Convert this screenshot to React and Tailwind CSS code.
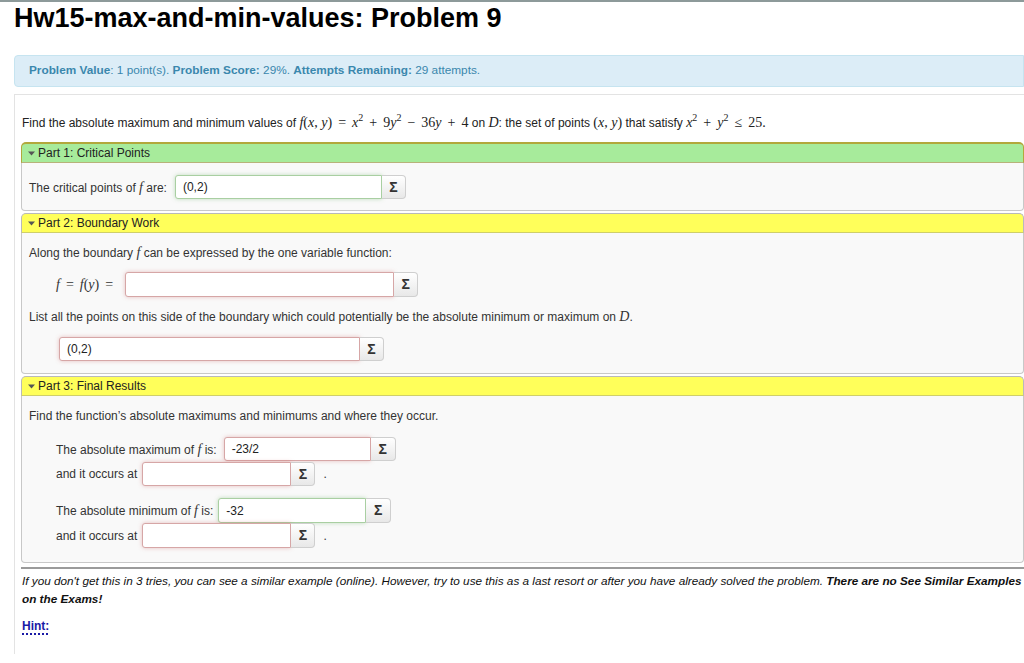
import React from "react";

const serif = "font-['Liberation_Serif','Times_New_Roman',serif] text-[14px]";

function V({ children }) {
  return <span className="italic">{children}</span>;
}
function Op({ children }) {
  return <span className="mx-[6px]">{children}</span>;
}
function Sup({ children }) {
  return <sup className="text-[10px] relative top-[-6px] align-baseline">{children}</sup>;
}

function Tri() {
  return (
    <svg width="7" height="5" viewBox="0 0 7 5" className="mr-[3px] inline-block">
      <path d="M0 0.5 L7 0.5 L3.5 4.5 Z" fill="#555" />
    </svg>
  );
}

function Field({ w, value = "", state = "bad", sigW = 24, h = 24 }) {
  const border =
    state === "good"
      ? "border-[#a9cfa2] shadow-[0_0_4px_rgba(90,170,80,0.35)]"
      : "border-[#d6a6a6] shadow-[0_0_4px_rgba(200,90,90,0.35)]";
  return (
    <span className="inline-flex items-stretch align-middle shrink-0" style={{ height: h }}>
      <span
        className={`bg-white border ${border} rounded-l-[3px] flex items-center pl-[7px] text-[12px] text-[#222]`}
        style={{ width: w }}
      >
        {value}
      </span>
      <span
        className="border border-l-0 border-[#cfcfcf] rounded-r-[4px] bg-gradient-to-b from-[#ffffff] to-[#e8e8e8] flex items-center justify-center text-[14px] font-bold text-[#333]"
        style={{ width: sigW }}
      >
        Σ
      </span>
    </span>
  );
}

function Header({ color, children }) {
  const cls =
    color === "green"
      ? "bg-[#a7eb9b] border-t-2 border-x border-[#b2a83c] border-b border-b-[#b7b27a]"
      : "bg-[#ffff5a] border-t border-x border-[#b9b9b9] border-b border-b-[#cfcf6a]";
  return (
    <div
      className={`${cls} rounded-t-[5px] flex items-center pl-[6px] text-[12px] text-[#222]`}
      style={{ height: color === "green" ? 21 : 20 }}
    >
      <Tri />
      {children}
    </div>
  );
}

function Body({ children, cls = "" }) {
  return (
    <div className={`bg-[#f9f9f9] border-x border-b border-[#c8c8c8] rounded-b-[4px] pl-[7px] text-[12px] text-[#333] ${cls}`}>
      {children}
    </div>
  );
}

export default function App() {
  return (
    <div className="w-[1024px] h-[663px] bg-white overflow-hidden border-t-2 border-[#8d9a9a] font-['Liberation_Sans',Arial,sans-serif] text-[12px] text-[#222]">
      <h1 className="ml-[14px] mt-[1px] text-[27px] font-bold leading-[30px] text-black whitespace-nowrap">
        Hw15-max-and-min-values: Problem 9
      </h1>
      <div className="ml-[14px] mt-[22px] h-[32px] bg-[#dcedf7] border border-[#c6e4f0] rounded-l-[4px] pl-[14px] flex items-center text-[#3a87ad] text-[11.8px]">
        <span>
          <b>Problem Value</b>: 1 point(s). <b>Problem Score:</b> 29%. <b>Attempts Remaining:</b> 29 attempts.
        </span>
      </div>
      <div className="ml-[14px] mt-[7px] h-[560px] border-l border-t border-[#e3e3e3] pl-[6px] pt-[20px]">
        <div className="pl-[1px] leading-[16px] h-[16px] whitespace-nowrap">
          Find the absolute maximum and minimum values of{" "}
          <span className={serif}>
            <V>f</V>(<V>x</V>, <V>y</V>)<Op>=</Op><V>x</V>
            <Sup>2</Sup>
            <Op>+</Op>9<V>y</V>
            <Sup>2</Sup>
            <Op>−</Op>36<V>y</V>
            <Op>+</Op>4
          </span>{" "}
          on <span className={serif}><V>D</V></span>: the set of points{" "}
          <span className={serif}>
            (<V>x</V>, <V>y</V>)
          </span>{" "}
          that satisfy{" "}
          <span className={serif}>
            <V>x</V>
            <Sup>2</Sup>
            <Op>+</Op>
            <V>y</V>
            <Sup>2</Sup>
            <Op>≤</Op>25.
          </span>
        </div>

        {/* Part 1 */}
        <div className="mt-[11px]">
          <Header color="green">Part 1: Critical Points</Header>
          <Body cls="pt-[12px] pb-[11px]">
            <div className="flex items-center h-[24px] whitespace-nowrap">
              <span>
                The critical points of <span className={serif}><V>f</V></span> are:
              </span>
              <span className="ml-[8px]">
                <Field w={207} value="(0,2)" state="good" />
              </span>
            </div>
          </Body>
        </div>

        {/* Part 2 */}
        <div className="mt-[2px]">
          <Header color="yellow">Part 2: Boundary Work</Header>
          <Body cls="pt-[12px] pb-[12px]">
            <div className="leading-[16px] whitespace-nowrap">
              Along the boundary <span className={serif}><V>f</V></span> can be expressed by the one variable function:
            </div>
            <div className="mt-[11px] flex items-center h-[25px] pl-[27px] whitespace-nowrap">
              <span className={`${serif} mr-[6px]`}>
                <V>f</V>
                <Op>=</Op>
                <V>f</V>(<V>y</V>)<Op>=</Op>
              </span>
              <Field w={269} h={25} />
            </div>
            <div className="mt-[12px] leading-[16px] whitespace-nowrap">
              List all the points on this side of the boundary which could potentially be the absolute minimum or maximum on{" "}
              <span className={serif}><V>D</V></span>.
            </div>
            <div className="mt-[12px] pl-[30px] h-[24px] flex items-center">
              <Field w={301} value="(0,2)" />
            </div>
          </Body>
        </div>

        {/* Part 3 */}
        <div className="mt-[2px]">
          <Header color="yellow">Part 3: Final Results</Header>
          <Body cls="pt-[12px] pb-[14px]">
            <div className="leading-[16px] whitespace-nowrap">
              Find the function’s absolute maximums and minimums and where they occur.
            </div>
            <div className="pl-[27px] whitespace-nowrap">
              <div className="mt-[13px] flex items-center h-[24px]">
                <span>
                  The absolute maximum of <span className={serif}><V>f</V></span> is:
                </span>
                <span className="ml-[7px]">
                  <Field w={147} value="-23/2" sigW={25} />
                </span>
              </div>
              <div className="mt-[1px] flex items-center h-[24px]">
                <span>and it occurs at</span>
                <span className="ml-[5px]">
                  <Field w={149} />
                </span>
                <span className="ml-[8px]">.</span>
              </div>
              <div className="mt-[12px] flex items-center h-[25px]">
                <span>
                  The absolute minimum of <span className={serif}><V>f</V></span> is:
                </span>
                <span className="ml-[5px]">
                  <Field w={148} value="-32" state="good" sigW={25} h={25} />
                </span>
              </div>
              <div className="flex items-center h-[25px]">
                <span>and it occurs at</span>
                <span className="ml-[5px]">
                  <Field w={149} h={25} />
                </span>
                <span className="ml-[8px]">.</span>
              </div>
            </div>
          </Body>
        </div>

        <div className="mt-[4px] border-t-2 border-[#9a9a9a]"></div>
        <div className="mt-[3px] pl-[1px] italic leading-[18px] text-[#111] whitespace-nowrap text-[11.75px]">
          If you don't get this in 3 tries, you can see a similar example (online). However, try to use this as a last resort or after you have already solved the problem.{" "}
          <b>There are no See Similar Examples</b>
          <br />
          <b>on the Exams!</b>
        </div>
        <div className="mt-[9px] pl-[1px] leading-[18px]">
          <span className="font-bold text-[#1a1aa6] underline decoration-dotted decoration-[#1a1aa6] decoration-2 underline-offset-[3px]">
            Hint:
          </span>
        </div>
      </div>
    </div>
  );
}
